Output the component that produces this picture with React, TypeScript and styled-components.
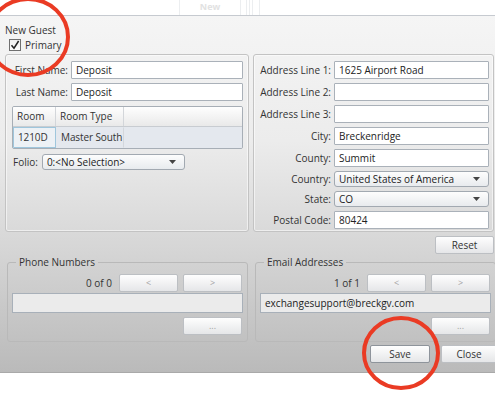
import styled, { createGlobalStyle } from 'styled-components';

const GlobalStyle = createGlobalStyle`
  html, body {
    margin: 0;
    padding: 0;
    background: #fff;
  }
  body {
    font-family: 'Open Sans', 'Liberation Sans', sans-serif;
    font-size: 10px;
    color: #333;
  }
`;

const leftRows = [
  { label: 'First Name:', value: 'Deposit' },
  { label: 'Last Name:', value: 'Deposit' },
];

const addressRows = [
  { label: 'Address Line 1:', value: '1625 Airport Road' },
  { label: 'Address Line 2:', value: '' },
  { label: 'Address Line 3:', value: '' },
  { label: 'City:', value: 'Breckenridge' },
  { label: 'County:', value: 'Summit' },
  { label: 'Country:', value: 'United States of America', combo: true },
  { label: 'State:', value: 'CO', combo: true },
  { label: 'Postal Code:', value: '80424' },
];

const Arrow = () => (
  <svg width='7' height='4' viewBox='0 0 7 4'>
    <path d='M0 0 L7 0 L3.5 4 Z' fill='#444' />
  </svg>
);

const App = () => {
  return (
    <Page>
      <GlobalStyle />
      <TopStrip>
        <StripCell $w={179} />
        <StripCell $w={61}>New</StripCell>
        <StripCell $w={6} />
        <StripCell $w={3} />
        <StripCell $w={3} />
        <StripCell $w={7} />
        <StripCell $w={236} />
      </TopStrip>

      <Dialog>
        <Title>New Guest</Title>
        <CheckRow>
          <CheckBox>
            <svg width='10' height='10' viewBox='0 0 10 10'>
              <path d='M1.5 5.2 L4 8.2 L8.6 1' stroke='#222' strokeWidth='1.5' fill='none' />
            </svg>
          </CheckBox>
          Primary
        </CheckRow>

        <TopGrid>
          <GroupBox>
            <FieldGrid $labelWidth={56}>
              {leftRows.map(row => (
                <FieldRow key={row.label}>
                  <Label>{row.label}</Label>
                  <Input>{row.value}</Input>
                </FieldRow>
              ))}
            </FieldGrid>
            <Table>
              <HeadRow>
                <HeadCell $w={43}>Room</HeadCell>
                <HeadCell $w={68}>Room Type</HeadCell>
                <HeadCell $w={0} />
              </HeadRow>
              <BodyRow>
                <BodyCell $w={43} $selected>
                  1210D
                </BodyCell>
                <BodyCell $w={68}>Master South</BodyCell>
                <BodyCell $w={0} />
              </BodyRow>
            </Table>
            <FolioRow>
              <span>Folio:</span>
              <Combo $width={143}>
                0:&lt;No Selection&gt;
                <Arrow />
              </Combo>
            </FolioRow>
          </GroupBox>

          <RightColumn>
            <GroupBox $tight>
              <FieldGrid $labelWidth={73}>
                {addressRows.map(row => (
                  <FieldRow key={row.label}>
                    <Label>{row.label}</Label>
                    {row.combo ? (
                      <Combo>
                        {row.value}
                        <Arrow />
                      </Combo>
                    ) : (
                      <Input>{row.value}</Input>
                    )}
                  </FieldRow>
                ))}
              </FieldGrid>
            </GroupBox>
            <ResetRow>
              <Button $width={59}>Reset</Button>
            </ResetRow>
          </RightColumn>
        </TopGrid>

        <BottomGrid>
          <ListBox>
            <legend>Phone Numbers</legend>
            <PagerRow>
              <PagerText>0 of 0</PagerText>
              <Button $width={59} $muted>
                &lt;
              </Button>
              <Button $width={59} $muted>
                &gt;
              </Button>
            </PagerRow>
            <ListField />
            <PagerRow>
              <Button $width={59} $muted>
                ...
              </Button>
            </PagerRow>
          </ListBox>
          <ListBox>
            <legend>Email Addresses</legend>
            <PagerRow>
              <PagerText>1 of 1</PagerText>
              <Button $width={59} $muted>
                &lt;
              </Button>
              <Button $width={59} $muted>
                &gt;
              </Button>
            </PagerRow>
            <ListField>exchangesupport@breckgv.com</ListField>
            <PagerRow>
              <Button $width={59} $muted>
                ...
              </Button>
            </PagerRow>
          </ListBox>
        </BottomGrid>

        <Footer>
          <Button $width={60} $focused>
            Save
          </Button>
          <Button $width={56}>Close</Button>
        </Footer>
      </Dialog>

      <Marks width='495' height='400' viewBox='0 0 495 400'>
        <ellipse cx='28' cy='37' rx='40' ry='38' />
        <ellipse cx='401' cy='353' rx='37' ry='35' />
      </Marks>
    </Page>
  );
};

const Page = styled.div`
  position: relative;
  width: 495px;
  height: 400px;
  overflow: hidden;
  background: #fff;
`;

const TopStrip = styled.div`
  display: flex;
  height: 15px;
  background: #fff;
`;

const StripCell = styled.div<{ $w: number }>`
  flex: 0 0 ${p => p.$w}px;
  border-left: 1px solid #eceef0;
  box-sizing: border-box;
  text-align: center;
  font-weight: bold;
  font-size: 9px;
  line-height: 14px;
  color: #e2e2e2;

  &:first-child {
    border-left: none;
  }
`;

const Dialog = styled.div`
  box-sizing: border-box;
  width: 500px;
  height: 358px;
  padding: 7px 0 0 5px;
  border-top: 1px solid #c6cad0;
  border-bottom: 1px solid #a9a9a9;
  background: linear-gradient(#f5f5f5 0%, #ececec 35%, #d6d6d6 65%, #bababa 100%);
`;

const Title = styled.div`
  height: 14px;
  line-height: 14px;
`;

const CheckRow = styled.div`
  display: flex;
  align-items: center;
  gap: 4px;
  height: 16px;
  padding-left: 4px;
`;

const CheckBox = styled.span`
  display: flex;
  align-items: center;
  justify-content: center;
  width: 10px;
  height: 10px;
  border: 1px solid #707070;
  background: linear-gradient(#f0f0f0, #fcfcfc);
`;

const TopGrid = styled.div`
  display: grid;
  grid-template-columns: 244px 241px;
  column-gap: 4px;
  margin-top: 1px;
`;

const GroupBox = styled.div<{ $tight?: boolean }>`
  box-sizing: border-box;
  height: 178px;
  padding: 6px ${p => (p.$tight ? '4px' : '5px')} 4px ${p => (p.$tight ? '4px' : '6px')};
  border: 1px solid #c3c3c3;
  border-radius: 3px;
  box-shadow: inset 0 0 0 1px rgba(255, 255, 255, 0.55);
  display: flex;
  flex-direction: column;
`;

const FieldGrid = styled.div<{ $labelWidth: number }>`
  display: grid;
  grid-template-columns: ${p => p.$labelWidth}px 1fr;
  column-gap: 3px;
  row-gap: 4px;
`;

const FieldRow = styled.div`
  display: contents;
`;

const Label = styled.span`
  align-self: center;
  text-align: right;
  white-space: nowrap;
`;

const Input = styled.div`
  box-sizing: border-box;
  height: 18px;
  line-height: 16px;
  padding: 0 4px;
  background: #fff;
  border: 1px solid #aab1b9;
  border-radius: 1px;
  color: #222;
  white-space: nowrap;
`;

const Combo = styled.div<{ $width?: number }>`
  box-sizing: border-box;
  display: flex;
  align-items: center;
  justify-content: space-between;
  height: 16px;
  width: ${p => (p.$width ? `${p.$width}px` : 'auto')};
  padding: 0 8px 0 4px;
  background: linear-gradient(#fdfdfd, #e8ebee);
  border: 1px solid #a2a9b1;
  border-radius: 3px;
  color: #222;
  white-space: nowrap;
`;

const Table = styled.div`
  margin-top: 5px;
  border: 1px solid #a7aeb6;
  border-radius: 2px;
  overflow: hidden;
`;

const HeadRow = styled.div`
  display: flex;
  height: 19px;
  background: linear-gradient(#fefefe, #e9e9e9);
  border-bottom: 1px solid #c8ccd1;
`;

const HeadCell = styled.div<{ $w: number }>`
  box-sizing: border-box;
  flex: ${p => (p.$w ? `0 0 ${p.$w}px` : '1')};
  padding-left: 4px;
  line-height: 19px;
  white-space: nowrap;
  border-right: 1px solid #d3d6da;

  &:last-child {
    border-right: none;
  }
`;

const BodyRow = styled.div`
  display: flex;
  height: 21px;
  background: #e4e8ee;
`;

const BodyCell = styled.div<{ $w: number; $selected?: boolean }>`
  box-sizing: border-box;
  flex: ${p => (p.$w ? `0 0 ${p.$w}px` : '1')};
  padding-left: 4px;
  line-height: 19px;
  white-space: nowrap;
  overflow: hidden;
  letter-spacing: -0.1px;
  border: 1px solid ${p => (p.$selected ? '#9fc6dc' : 'transparent')};
  border-right-color: ${p => (p.$selected ? '#9fc6dc' : '#d3d7dc')};
  background: ${p => (p.$selected ? '#edf1f5' : 'transparent')};

  &:last-child {
    border-right-color: transparent;
  }
`;

const FolioRow = styled.div`
  display: flex;
  align-items: center;
  gap: 4px;
  margin-top: 5px;
  padding-left: 1px;
`;

const RightColumn = styled.div`
  display: flex;
  flex-direction: column;
`;

const ResetRow = styled.div`
  display: flex;
  justify-content: flex-end;
  margin-top: 4px;
`;

const Button = styled.div<{ $width: number; $muted?: boolean; $focused?: boolean }>`
  box-sizing: border-box;
  width: ${p => p.$width}px;
  height: 18px;
  line-height: 16px;
  text-align: center;
  background: linear-gradient(#fefefe, #e5e6e8);
  border: 1px solid ${p => (p.$focused ? '#8e949b' : '#bcbfc3')};
  border-radius: 2px;
  color: ${p => (p.$muted ? '#a3a3a3' : '#333')};
  font-size: ${p => (p.$muted ? '9px' : '10px')};
`;

const BottomGrid = styled.div`
  display: grid;
  grid-template-columns: 241px 241px;
  column-gap: 7px;
  margin: 3px 0 0 2px;
`;

const ListBox = styled.fieldset`
  box-sizing: border-box;
  height: 85px;
  margin: 0;
  padding: 6px 4px 0 4px;
  border: 1px solid #b9b9b9;
  border-radius: 3px;
  display: flex;
  flex-direction: column;

  legend {
    padding: 0 3px;
    margin-left: 4px;
    line-height: 11px;
  }
`;

const PagerRow = styled.div`
  display: flex;
  justify-content: flex-end;
  align-items: center;
  gap: 5px;
  padding-right: 1px;
`;

const PagerText = styled.span`
  margin-right: 2px;
`;

const ListField = styled.div`
  box-sizing: border-box;
  height: 20px;
  line-height: 18px;
  margin: 1px 0 4px;
  padding: 0 4px;
  background: #ebebeb;
  border: 1px solid #a8b0b9;
  color: #222;
`;

const Footer = styled.div`
  display: flex;
  justify-content: flex-end;
  gap: 11px;
  margin-top: 3px;
  padding-right: 3px;
`;

const Marks = styled.svg`
  position: absolute;
  left: 0;
  top: 0;
  pointer-events: none;

  ellipse {
    fill: none;
    stroke: #ea3b24;
    stroke-width: 4;
  }
`;

export default App;
